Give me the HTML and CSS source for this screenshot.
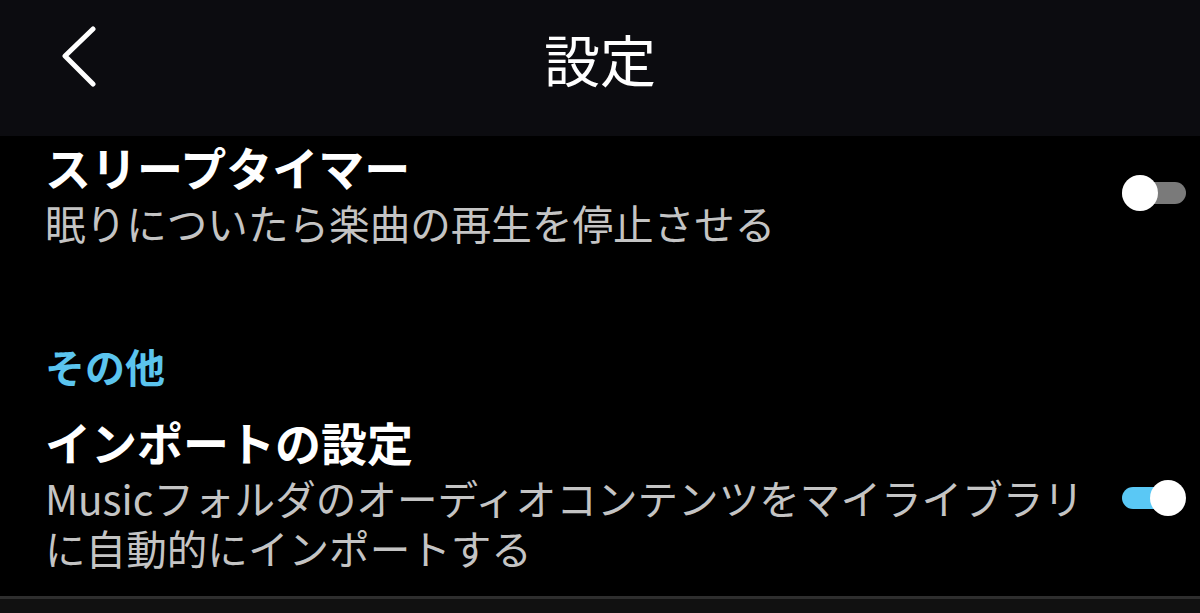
FILE: index.html
```html
<!DOCTYPE html>
<html lang="ja">
<head>
<meta charset="utf-8">
<link rel="stylesheet" href="styles.css">
</head>
<body>
<div class="app">
  <header class="header">
    <button class="back" aria-label="戻る">
      <svg width="40" height="62" viewBox="0 0 40 62"><path d="M34 3 L6 30 L34 58" fill="none" stroke="#fff" stroke-width="5" stroke-linecap="round" stroke-linejoin="round"/></svg>
    </button>
    <h1 class="title">設定</h1>
  </header>
  <main class="list">
    <div class="row row-first">
      <div class="texts">
        <div class="label">スリープタイマー</div>
        <div class="desc">眠りについたら楽曲の再生を停止させる</div>
      </div>
      <div class="toggle off"><span class="track"></span><span class="thumb"></span></div>
    </div>
    <div class="section">その他</div>
    <div class="row row-last">
      <div class="texts">
        <div class="label">インポートの設定</div>
        <div class="desc">Musicフォルダのオーディオコンテンツをマイライブラリに自動的にインポートする</div>
      </div>
      <div class="toggle on"><span class="track"></span><span class="thumb"></span></div>
    </div>
  </main>
  <div class="divider"></div>
  <div class="footer"></div>
</div>
</body>
</html>
```
FILE: styles.css
```css
* { box-sizing: border-box; }
html, body { margin: 0; padding: 0; background: #000; }
body {
  width: 1200px;
  height: 613px;
  overflow: hidden;
  font-family: "Noto Sans CJK JP", "Noto Sans", sans-serif;
  color: #fff;
}
.app { display: flex; flex-direction: column; height: 613px; }
.header {
  height: 136px;
  background: #0c0c10;
  display: flex;
  align-items: flex-start;
  justify-content: center;
  position: relative;
  flex-shrink: 0;
}
.back {
  position: absolute;
  left: 59px;
  top: 26px;
  background: none;
  border: 0;
  padding: 0;
  width: 40px;
  height: 62px;
}
.back svg { display: block; }
.title {
  margin: 0;
  margin-top: 20px;
  font-size: 56px;
  font-weight: 400;
  line-height: 76px;
}
.list { flex: 1; padding: 0 14px 0 45px; display: flex; flex-direction: column; }
.row { display: flex; align-items: center; justify-content: space-between; }
.row-first { padding-top: 2px; }
.texts { width: 1040px; }
.label { font-size: 46px; font-weight: 700; line-height: 56px; }
.desc { font-size: 40.6px; line-height: 50px; color: #c4c4c4; margin-top: 4px; }
.section {
  margin-top: 92px;
  font-size: 40px;
  font-weight: 700;
  line-height: 52px;
  color: #5bc4ee;
}
.row-last { margin-top: 21px; }
.row-last .toggle { margin-top: 10px; }
.toggle { position: relative; width: 64px; height: 36px; flex-shrink: 0; }
.track { position: absolute; left: 0; right: 0; top: 7px; height: 22px; border-radius: 11px; }
.thumb { position: absolute; top: 0; width: 36px; height: 36px; border-radius: 50%; background: #fff; }
.off .track { background: #7a7a7a; }
.off .thumb { left: 0; }
.on .track { background: #5ac8f5; right: 6px; }
.on .thumb { right: 0; }
.divider { height: 3px; background: #2e2e2e; flex-shrink: 0; }
.footer { height: 14px; background: #111; flex-shrink: 0; }
```
